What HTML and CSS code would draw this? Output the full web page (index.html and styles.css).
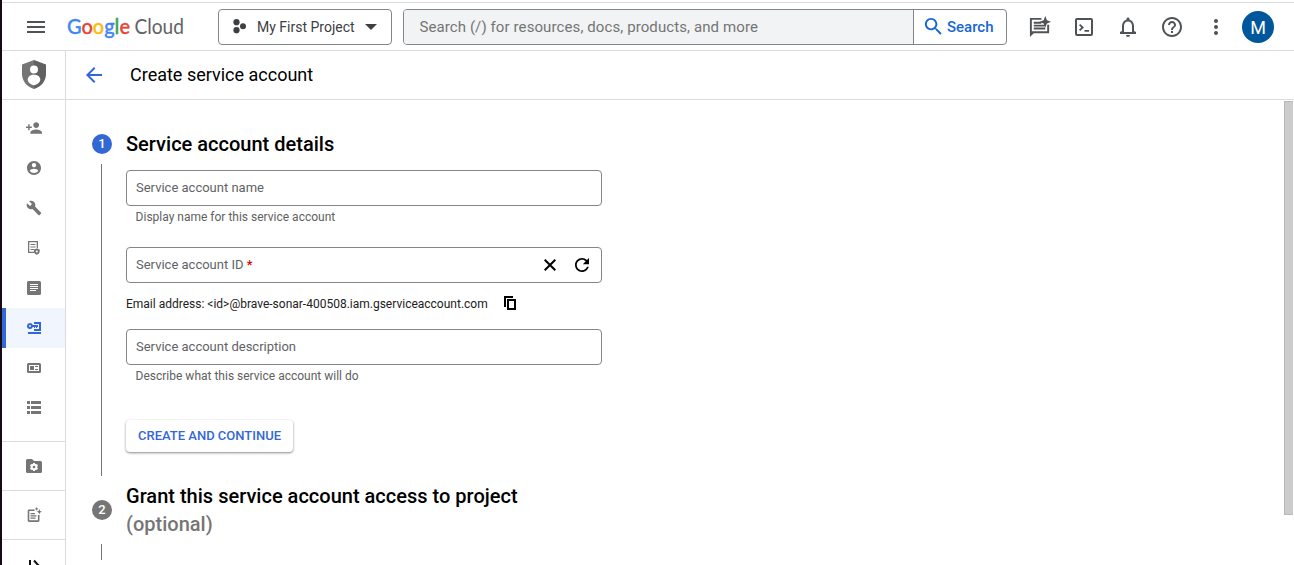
FILE: index.html
```html
<!DOCTYPE html>
<html lang="en">
<head>
<meta charset="utf-8">
<title>Create service account</title>
<link rel="stylesheet" href="styles.css">
</head>
<body>
<div class="app">
  <header class="topbar">
    <button class="icon-btn menu"><svg width="24" height="24" viewBox="0 0 24 24"><path d="M3 18h18v-2H3v2zm0-5h18v-2H3v2zm0-7v2h18V6H3z"/></svg></button>
    <svg class="logo" width="120" height="30" viewBox="0 0 120 30"><text class="logo-google" x="0" y="21.500" textLength="63" lengthAdjust="spacingAndGlyphs"><tspan class="g-blue">G</tspan><tspan class="g-red">o</tspan><tspan class="g-yellow">o</tspan><tspan class="g-blue">g</tspan><tspan class="g-green">l</tspan><tspan class="g-red">e</tspan></text><text class="logo-cloud" x="67.500" y="21.500" textLength="49.5" lengthAdjust="spacingAndGlyphs">Cloud</text></svg>
    <button class="project">
      <svg width="16" height="16" viewBox="0 0 16 16"><circle cx="4.5" cy="3.2" r="3.1"/><circle cx="4.5" cy="11.2" r="3.1"/><circle cx="11" cy="7.2" r="3"/></svg>
      <span>My First Project</span>
      <svg width="12" height="6" viewBox="0 0 12 6"><path d="M0 0h12L6 6z"/></svg>
    </button>
    <div class="search">
      <div class="search-input">Search (/) for resources, docs, products, and more</div>
      <button class="search-btn"><svg width="23" height="23" viewBox="0 0 24 24"><path d="M15.5 14h-.79l-.28-.27C15.41 12.59 16 11.11 16 9.5 16 5.91 13.09 3 9.5 3S3 5.91 3 9.5 5.91 16 9.5 16c1.61 0 3.09-.59 4.23-1.57l.27.28v.79l5 4.99L20.49 19l-4.99-5zm-6 0C7.01 14 5 11.99 5 9.5S7.01 5 9.5 5 14 7.01 14 9.5 11.99 14 9.5 14z"/></svg><span>Search</span></button>
    </div>
    <nav class="tools">
      <svg width="24" height="24" viewBox="0 0 24 24"><path d="M14 2H2v20l4-4h16v-9h-2v7H4V4h10zM6 6h8v2H6zM6 9h12v2H6zM6 12h12v2H6zM18 0l1.700 4.300L24 6l-4.300 1.700L18 12l-1.700-4.300L12 6l4.300-1.700z" transform="translate(0 1) scale(.96)"/></svg>
      <svg width="24" height="24" viewBox="0 0 24 24"><path fill-rule="evenodd" d="M5 3h14a2 2 0 0 1 2 2v14a2 2 0 0 1-2 2H5a2 2 0 0 1-2-2V5c0-1.100.9-2 2-2zm0 2v14h14V5zM8.200 9l3.800 3.500L8.200 16 7 14.700l2.300-2.200L7 10.300zM12.500 15H17v1.700h-4.500z"/></svg>
      <svg width="24" height="24" viewBox="0 0 24 24"><path d="M12 22c1.100 0 2-.9 2-2h-4c0 1.100.9 2 2 2zm6-6v-5c0-3.070-1.630-5.640-4.500-6.320V4c0-.83-.67-1.500-1.500-1.500s-1.500.67-1.500 1.500v.68C7.640 5.360 6 7.920 6 11v5l-2 1v2h16v-2l-2-1zm-2 1H8v-6c0-2.480 1.510-4.500 4-4.500s4 2.020 4 4.500v6z"/></svg>
      <svg width="24" height="24" viewBox="0 0 24 24"><path d="M11 18h2v-2h-2v2zm1-16C6.480 2 2 6.480 2 12s4.480 10 10 10 10-4.480 10-10S17.520 2 12 2zm0 18c-4.410 0-8-3.590-8-8s3.590-8 8-8 8 3.590 8 8-3.590 8-8 8zm0-14c-2.210 0-4 1.790-4 4h2c0-1.100.9-2 2-2s2 .9 2 2c0 2-3 1.750-3 5h2c0-2.250 3-2.500 3-5 0-2.210-1.790-4-4-4z"/></svg>
      <svg width="24" height="24" viewBox="0 0 24 24"><path d="M12 8c1.100 0 2-.9 2-2s-.9-2-2-2-2 .9-2 2 .9 2 2 2zm0 2c-1.100 0-2 .9-2 2s.9 2 2 2 2-.9 2-2-.9-2-2-2zm0 6c-1.100 0-2 .9-2 2s.9 2 2 2 2-.9 2-2-.9-2-2-2z"/></svg>
    </nav>
    <div class="avatar">M</div>
  </header>

  <div class="body">
    <aside class="sidebar">
      <div class="product"><svg width="24" height="29" viewBox="0 0 24 29"><path class="shield-left" d="M12 0 0 4.500V14c0 7 5 13 12 15z"/><path class="shield-right" d="M12 0l12 4.500V14c0 7-5 13-12 15z"/><circle class="shield-person" cx="12" cy="9.500" r="4"/><path class="shield-person" d="M12 14.700c3.600 0 6.300 2 6.300 4.900 0 2.600-3.300 5.600-6.300 5.600s-6.300-3-6.300-5.600c0-2.900 2.700-4.900 6.300-4.900z"/></svg></div>
      <nav class="nav">
        <a class="nav-item"><svg width="16" height="12" viewBox="1 4 22 16"><path d="M15 12c2.210 0 4-1.790 4-4s-1.790-4-4-4-4 1.790-4 4 1.790 4 4 4zm-9-2V7H4v3H1v2h3v3h2v-3h3v-2H6zm9 4c-2.670 0-8 1.340-8 4v2h16v-2c0-2.660-5.330-4-8-4z"/></svg></a>
        <a class="nav-item"><svg width="14" height="14" viewBox="2 2 20 20"><path d="M12 2C6.480 2 2 6.480 2 12s4.480 10 10 10 10-4.480 10-10S17.520 2 12 2zm0 3c1.660 0 3 1.340 3 3s-1.340 3-3 3-3-1.340-3-3 1.340-3 3-3zm0 14.200c-2.500 0-4.710-1.280-6-3.220.03-1.990 4-3.080 6-3.080 1.990 0 5.970 1.090 6 3.080-1.290 1.940-3.500 3.220-6 3.220z"/></svg></a>
        <a class="nav-item"><svg width="16" height="16" viewBox="0 0 24 24"><path d="M22.700 19l-9.100-9.100c.9-2.300.4-5-1.500-6.900-2-2-5-2.400-7.400-1.300L9 6 6 9 1.600 4.700C.4 7.100.9 10.100 2.900 12.100c1.900 1.900 4.600 2.400 6.900 1.500l9.100 9.100c.4.4 1 .4 1.400 0l2.300-2.300c.5-.4.5-1.100.1-1.400z"/></svg></a>
        <a class="nav-item"><svg width="16" height="16" viewBox="0 0 16 16"><path fill-rule="evenodd" d="M2 1h10v7.200h-1.300V2.300H3.300v9.400H8V13H2zM4.500 4h5v1h-5zM4.500 6.500h5v1h-5zM4.500 9h4v1h-4zM10.800 8.500l2.900 1.100v2c0 1.500-1.200 2.700-2.900 3.200-1.700-.5-2.900-1.700-2.900-3.200v-2zm0 2a1 1 0 1 0 0 2 1 1 0 0 0 0-2z"/></svg></a>
        <a class="nav-item"><svg width="14" height="14" viewBox="0 0 14 14"><path fill-rule="evenodd" d="M1.500 0h11A1.500 1.500 0 0 1 14 1.500v11a1.500 1.500 0 0 1-1.500 1.500h-11A1.500 1.500 0 0 1 0 12.500v-11A1.500 1.500 0 0 1 1.500 0zM3 3v1h8V3zm0 2v1h8V5zm0 2v1h8V7zm0 2v1h6V9z"/></svg></a>
        <a class="nav-item active"><svg width="14" height="12" viewBox="0 0 14 12"><path fill-rule="evenodd" d="M3 1a3 3 0 0 1 2.800 2H11v2h-1v1H9V5H8v1H7V5H5.800A3 3 0 1 1 3 1zm0 2a1 1 0 1 0 0 2 1 1 0 0 0 0-2zM7 0h7v9H7V7h5V2H7zM1 10h13v2H1z"/></svg></a>
        <a class="nav-item"><svg width="14" height="10" viewBox="0 0 14 10"><path fill-rule="evenodd" d="M1.500 0h11A1.500 1.500 0 0 1 14 1.500v7a1.500 1.500 0 0 1-1.500 1.500h-11A1.500 1.500 0 0 1 0 8.500v-7A1.500 1.500 0 0 1 1.500 0zM2 2v6h10V2zm1 1h4v4H3zM8 3h3v1H8zM8 6h3v1H8z"/></svg></a>
        <a class="nav-item"><svg width="14" height="14" viewBox="0 0 14 14"><path d="M0 0h3v3H0zM4 0h10v3H4zM0 5h3v3H0zM4 5h10v3H4zM0 10h3v3H0zM4 10h10v3H4z"/></svg></a>
      </nav>
      <a class="side-foot"><svg width="16" height="14" viewBox="0 0 16 14"><path d="M1.500 0H6l2 2h6.500A1.500 1.500 0 0 1 16 3.500v9a1.500 1.500 0 0 1-1.500 1.500h-13A1.500 1.500 0 0 1 0 12.500v-11A1.500 1.500 0 0 1 1.500 0z"/><g class="gear"><circle cx="8" cy="8" r="3.200"/><path d="M7 4h2v8H7zM4 6.900 5 5.100l7 4-1 1.800zM11 5.100l1 1.800-7 4-1-1.800z"/></g><circle cx="8" cy="8" r="1.300"/></svg></a>
      <a class="side-foot"><svg width="16" height="16" viewBox="0 0 16 16"><path fill-rule="evenodd" d="M3 2.500h5.500v1.600H3.300v9.200h8.600V8h1.600v5.300c0 .9-.6 1.600-1.500 1.600H3.200c-.9 0-1.500-.7-1.500-1.600V4c0-.9.500-1.500 1.300-1.500zM4.500 6H9v1.200H4.500zM4.500 8.200h6v1.200h-6zM4.500 10.500h5v1.200h-5zM10.600 0l.6 1.300 1.300.6-1.300.6-.6 1.300-.6-1.300-1.300-.6 1.300-.6zM13.300 2l.8 2 2 .8-2 .8-.8 2-.8-2-2-.8 2-.8z"/></svg></a>
      <a class="side-foot expand"><svg width="12" height="14" viewBox="0 0 12 14"><path d="M2 1v12M6 1.500l5 5.500-5 5.500"/></svg></a>
    </aside>

    <div class="page">
      <div class="page-head">
        <svg width="24" height="24" viewBox="0 0 24 24"><path d="M20 11H7.830l5.590-5.590L12 4l-8 8 8 8 1.410-1.410L7.830 13H20v-2z"/></svg>
        <h1>Create service account</h1>
      </div>
      <div class="scroll-area">
        <main class="stepper">
          <section class="step">
            <div class="rail"><span class="badge current">1</span><span class="line"></span></div>
            <div class="step-content">
              <h2>Service account details</h2>
              <div class="field"><span class="label">Service account name</span></div>
              <p class="hint">Display name for this service account</p>
              <div class="field field-id"><span class="label">Service account ID <b>*</b></span>
                <svg width="12" height="12" viewBox="0 0 12 12"><path class="stroke" d="M.7.700l10.600 10.600M11.300.700.7 11.300"/></svg>
                <svg width="14" height="14" viewBox="4 4 16 16"><path d="M17.650 6.350C16.200 4.900 14.210 4 12 4c-4.420 0-7.990 3.580-7.990 8s3.570 8 7.990 8c3.730 0 6.840-2.550 7.730-6h-2.080c-.82 2.330-3.040 4-5.650 4-3.310 0-6-2.690-6-6s2.690-6 6-6c1.660 0 3.140.69 4.220 1.780L13 11h7V4l-2.350 2.350z"/></svg>
              </div>
              <p class="email"><span>Email address: &lt;id&gt;@brave-sonar-400508.iam.gserviceaccount.com</span>
                <svg width="12" height="16" viewBox="0 0 12 16"><path fill-rule="evenodd" d="M0 0h9v2H2v9H0zM3 3h9v11H3zm2 2v7h5V5z"/></svg></p>
              <div class="field"><span class="label">Service account description</span></div>
              <p class="hint">Describe what this service account will do</p>
              <button class="create">CREATE AND CONTINUE</button>
            </div>
          </section>
          <section class="step second">
            <div class="rail"><span class="badge">2</span><span class="line"></span></div>
            <div class="step-content"><h2>Grant this service account access to project<br><span class="optional">(optional)</span></h2></div>
          </section>
        </main>
        <div class="scrollbar"><div class="thumb"></div></div>
      </div>
    </div>
  </div>
</div>
</body>
</html>
```
FILE: styles.css
```css
* { box-sizing: border-box; }
body { margin: 0; overflow: hidden; background: #fff; color: #000; font-family: Roboto, "Liberation Sans", sans-serif; }
h1, h2, p { margin: 0; font-weight: 400; }
button { margin: 0; padding: 0; border: 0; background: none; font: inherit; }
svg { display: block; flex: none; fill: currentColor; }

.app { height: 565px; padding-top: 2px; border-left: 2px solid #170913; display: flex; flex-direction: column; overflow: hidden; }

.topbar { flex: none; height: 49px; border-top: 1px solid #dadce0; border-bottom: 1px solid #dadce0; display: flex; align-items: center; color: #505356; }
.icon-btn { margin-left: 22px; color: #505356; }
.logo { margin-left: 19px; width: 120px; overflow: visible; }
.logo-google { font: 500 21px Lato, sans-serif; stroke-width: .35px; }
.logo-cloud { font: 400 20.5px Lato, sans-serif; fill: #5f6368; }
.g-blue { fill: #4285f4; stroke: #4285f4; }
.g-red { fill: #ea4335; stroke: #ea4335; }
.g-yellow { fill: #fbbc04; stroke: #fbbc04; }
.g-green { fill: #34a853; stroke: #34a853; }
.project { margin-left: 31px; width: 174px; height: 36px; border: 1px solid #80868b; border-radius: 4px; display: flex; align-items: center; padding: 0 14px 0 13px; color: #3c4043; font-size: 14px; }
.project span { margin: 0 auto 0 9px; }
.search { margin-left: 11px; width: 604px; height: 36px; display: flex; border: 1px solid #80868b; border-radius: 4px; overflow: hidden; }
.search-input { flex: 1; background: #f1f3f4; color: #757575; font-size: 15px; letter-spacing: .1px; line-height: 34px; padding-left: 15.4px; white-space: nowrap; }
.search-btn { width: 93px; border-left: 1px solid #80868b; color: #1967d2; display: flex; align-items: center; padding-left: 8px; gap: 2px; font-size: 15px; font-weight: 500; }
.tools { margin-left: 21px; display: flex; gap: 20px; }
.avatar { margin-left: 14px; width: 32px; height: 32px; border-radius: 50%; background: #01579b; color: #fff; font-size: 18px; line-height: 33px; text-align: center; }

.body { flex: 1; min-height: 0; display: flex; }
.sidebar { flex: none; width: 64px; border-right: 1px solid #dadce0; color: #757575; }
.product { height: 49px; border-bottom: 1px solid #dadce0; display: flex; justify-content: center; padding: 9px 0 0 1px; }
.shield-left { fill: #757575; }
.shield-right { fill: #616161; }
.shield-person { fill: #fff; }
.nav { padding: 8px 0 13px; }
.nav-item { height: 40px; display: flex; align-items: center; justify-content: center; padding-left: 1px; }
.nav-item.active { background: #f0f5fe; color: #3367d6; border-left: 4px solid #3367d6; padding-right: 3px; padding-left: 0; }
.side-foot { height: 49px; border-top: 1px solid #dadce0; display: flex; align-items: center; justify-content: center; padding-left: 1px; }
.gear { fill: #fff; }
.expand { color: #111; }
.expand svg { fill: none; stroke: currentColor; stroke-width: 2; margin-top: 4px; }

.page { flex: 1; display: flex; flex-direction: column; min-width: 0; }
.page-head { flex: none; height: 49px; border-bottom: 1px solid #dadce0; display: flex; align-items: center; gap: 24px; padding-left: 16px; color: #3367d6; }
.page-head h1 { font-size: 18px; color: #000; line-height: 24px; }
.scroll-area { flex: 1; min-height: 0; display: flex; justify-content: space-between; }
.stepper { padding: 30px 0 0 26px; }
.step { display: flex; gap: 14px; height: 346px; }
.rail { width: 20px; display: flex; flex-direction: column; align-items: center; gap: 10px; padding-top: 4px; }
.badge { flex: none; width: 20px; height: 20px; border-radius: 50%; background: #757575; color: #fff; font-size: 13px; font-weight: 500; line-height: 20px; text-align: center; }
.badge.current { background: #3367d6; }
.line { width: 1px; height: 312px; margin-right: 1px; background: #757575; }
.step-content { width: 476px; }
h2 { font-size: 20px; font-weight: 500; line-height: 28px; letter-spacing: .01px; }
.field { height: 36px; border: 1px solid #80868b; border-radius: 4px; padding: 0 12px 0 9px; display: flex; align-items: center; }
h2 + .field { margin-top: 12px; }
.label { flex: 1; font-size: 13px; line-height: 16px; color: #5f6368; }
.label b { color: #e00000; font-weight: 500; }
.hint { margin: 3px 0 0 9.6px; color: #616161; font-size: 12px; line-height: 16px; }
.field-id { margin-top: 22px; gap: 19px; }
.stroke { fill: none; stroke: currentColor; stroke-width: 2; }
.email { height: 46px; display: flex; align-items: center; gap: 16px; padding-bottom: 5px; font-size: 12px; color: #212121; }
.email svg { color: #000; }
.create { display: block; margin-top: 36px; width: 167px; height: 32px; padding-bottom: 2px; border-radius: 4px; color: #3367d6; font-size: 13px; font-weight: 500; box-shadow: 0 1px 3px rgba(0,0,0,.25), 0 1px 2px rgba(0,0,0,.25); }
.second { margin-top: 6px; }
.second .rail { padding-top: 18px; gap: 24px; }
.second .line { height: 16px; }
.optional { color: #757575; }
.scrollbar { width: 10px; padding: 1px 1px 0 0; }
.thumb { height: 414px; background: #ccc; border: solid #b8b8b8; border-width: 1px 0 1px 1px; }
```
